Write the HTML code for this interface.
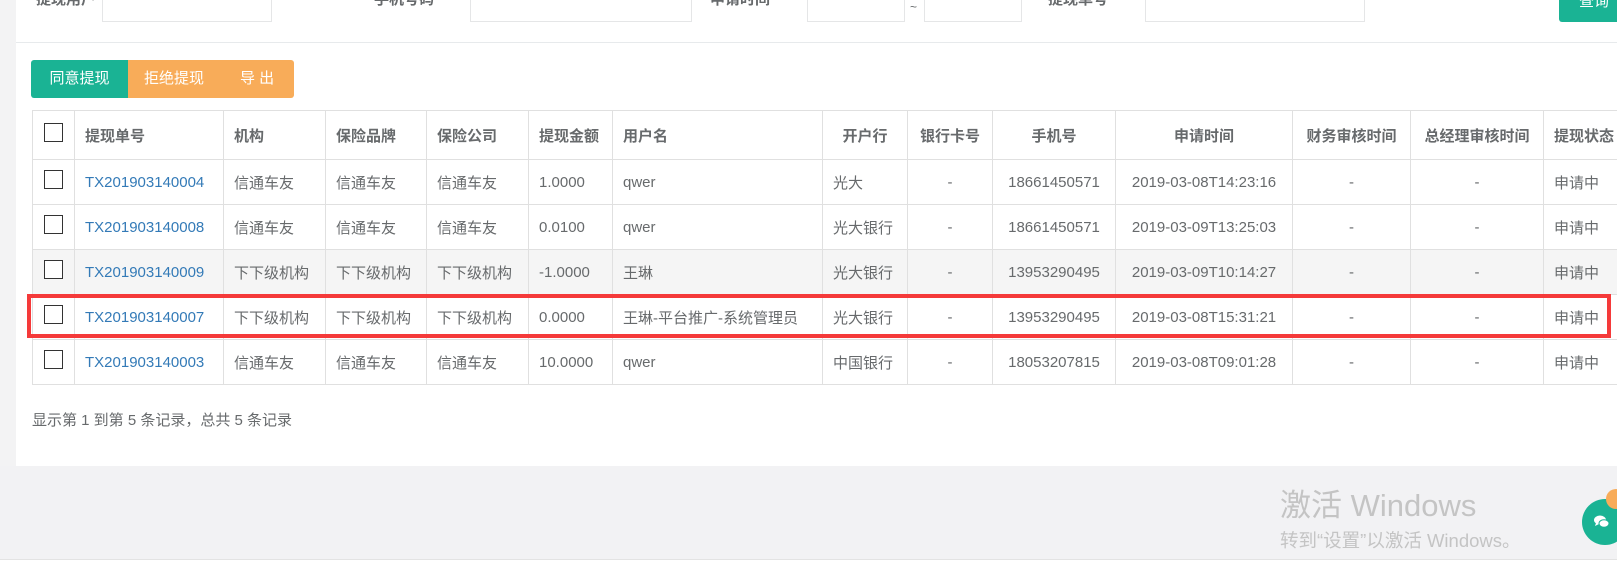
<!DOCTYPE html>
<html><head><meta charset="utf-8"><style>
*{margin:0;padding:0;box-sizing:border-box}
body{width:1617px;height:571px;overflow:hidden;background:#fff;position:relative;font-family:"Liberation Sans","Noto Sans CJK SC",sans-serif;font-size:15px;color:#676a6c}
.lg{position:absolute;left:0;top:0;width:16px;height:466px;background:#f3f3f4}
.gb{position:absolute;left:0;top:466px;width:1617px;height:93px;background:#f2f2f4}
.bl{position:absolute;left:0;top:559px;width:1617px;height:1px;background:#e3e3e3}
.inp{position:absolute;top:-10px;height:32px;border:1px solid #e5e6e7;background:#fff}
.lab{position:absolute;top:-12px;font-weight:bold;font-size:15px;color:#676a6c}
.hr{position:absolute;left:16px;top:42px;width:1601px;height:1px;background:#e7eaec}
.btn{position:absolute;top:60px;height:38px;color:#fff;font-size:15px;line-height:38px;text-align:center}
.wrap{position:absolute;left:32px;top:110px;width:1585px;overflow:hidden;height:277px}
table{border-collapse:collapse;table-layout:fixed;width:1660px;border:1px solid #ddd}
td,th{border:1px solid #e0e0e0;padding:0 10px;white-space:nowrap;overflow:hidden;text-align:left}
th{height:49px;font-weight:bold;color:#676a6c}
td{height:45px}
.c{text-align:center}
a{color:#337ab7;text-decoration:none}
.cb{display:inline-block;width:19px;height:19px;border:1px solid #333;vertical-align:middle;background:#fff;position:relative;top:-3px}
tr.g td{background:#f5f5f5}
.red{position:absolute;left:27px;top:294px;width:1584px;height:44px;border:4px solid #f53a3a}
</style></head><body>
<div class="lg"></div>
<div class="lab" style="left:36px">提现用户</div>
<div class="inp" style="left:102px;width:170px"></div>
<div class="lab" style="left:374px">手机号码</div>
<div class="inp" style="left:470px;width:222px"></div>
<div class="lab" style="left:710px">申请时间</div>
<div class="inp" style="left:807px;width:98px"></div>
<div style="position:absolute;left:910px;top:0;font-size:12px">~</div>
<div class="inp" style="left:924px;width:98px"></div>
<div class="lab" style="left:1048px">提现单号</div>
<div class="inp" style="left:1145px;width:220px"></div>
<div class="btn" style="left:1559px;top:-16px;width:70px;height:38px;background:#1ab394;border-radius:3px;line-height:36px">查询</div>
<div class="hr"></div>
<div class="btn" style="left:31px;width:97px;background:#1ab394;border-radius:3px 0 0 3px">同意提现</div>
<div class="btn" style="left:128px;width:166px;background:#f8ac59;border-radius:0 3px 3px 0"><span style="position:absolute;left:16px">拒绝提现</span><span style="position:absolute;left:112px">导 出</span></div>
<div class="wrap"><table>
<colgroup><col style="width:42px"><col style="width:149px"><col style="width:102px"><col style="width:101px"><col style="width:102px"><col style="width:84px"><col style="width:210px"><col style="width:85px"><col style="width:85px"><col style="width:123px"><col style="width:177px"><col style="width:118px"><col style="width:133px"><col style="width:149px"></colgroup>
<tr><th class="c"><span class="cb"></span></th><th>提现单号</th><th>机构</th><th>保险品牌</th><th>保险公司</th><th>提现金额</th><th>用户名</th><th class="c">开户行</th><th class="c">银行卡号</th><th class="c">手机号</th><th class="c">申请时间</th><th class="c">财务审核时间</th><th class="c">总经理审核时间</th><th>提现状态</th></tr>
<tr><td class="c"><span class="cb"></span></td><td><a>TX201903140004</a></td><td>信通车友</td><td>信通车友</td><td>信通车友</td><td>1.0000</td><td>qwer</td><td>光大</td><td class="c">-</td><td class="c">18661450571</td><td class="c">2019-03-08T14:23:16</td><td class="c">-</td><td class="c">-</td><td>申请中</td></tr>
<tr><td class="c"><span class="cb"></span></td><td><a>TX201903140008</a></td><td>信通车友</td><td>信通车友</td><td>信通车友</td><td>0.0100</td><td>qwer</td><td>光大银行</td><td class="c">-</td><td class="c">18661450571</td><td class="c">2019-03-09T13:25:03</td><td class="c">-</td><td class="c">-</td><td>申请中</td></tr>
<tr class="g"><td class="c"><span class="cb"></span></td><td><a>TX201903140009</a></td><td>下下级机构</td><td>下下级机构</td><td>下下级机构</td><td>-1.0000</td><td>王琳</td><td>光大银行</td><td class="c">-</td><td class="c">13953290495</td><td class="c">2019-03-09T10:14:27</td><td class="c">-</td><td class="c">-</td><td>申请中</td></tr>
<tr><td class="c"><span class="cb"></span></td><td><a>TX201903140007</a></td><td>下下级机构</td><td>下下级机构</td><td>下下级机构</td><td>0.0000</td><td>王琳-平台推广-系统管理员</td><td>光大银行</td><td class="c">-</td><td class="c">13953290495</td><td class="c">2019-03-08T15:31:21</td><td class="c">-</td><td class="c">-</td><td>申请中</td></tr>
<tr><td class="c"><span class="cb"></span></td><td><a>TX201903140003</a></td><td>信通车友</td><td>信通车友</td><td>信通车友</td><td>10.0000</td><td>qwer</td><td>中国银行</td><td class="c">-</td><td class="c">18053207815</td><td class="c">2019-03-08T09:01:28</td><td class="c">-</td><td class="c">-</td><td>申请中</td></tr>
</table></div>
<div class="red"></div>
<div style="position:absolute;left:32px;top:409px;font-size:15px">显示第 1 到第 5 条记录，总共 5 条记录</div>
<div class="gb"></div>
<div class="bl"></div>
<div style="position:absolute;left:1280px;top:488px;font-size:31px;color:#c4c4c4;line-height:36px">激活 Windows</div>
<div style="position:absolute;left:1280px;top:530px;font-size:18.5px;color:#c4c4c4;line-height:22px">转到“设置”以激活 Windows。</div>
<div style="position:absolute;left:1582px;top:499px;width:46px;height:46px;border-radius:50%;background:#1ab394"></div>
<div style="position:absolute;left:1606px;top:489px;width:20px;height:20px;border-radius:50%;background:#f8ac59"></div>
<svg style="position:absolute;left:1594px;top:514px" width="16" height="16" viewBox="0 0 16 16"><ellipse cx="6" cy="6" rx="6" ry="4.5" fill="#fff"/><path d="M2 9l-1 3 4-2z" fill="#fff"/><ellipse cx="10" cy="9.5" rx="5" ry="3.8" fill="#fff" stroke="#1ab394" stroke-width="1"/></svg>
</body></html>
